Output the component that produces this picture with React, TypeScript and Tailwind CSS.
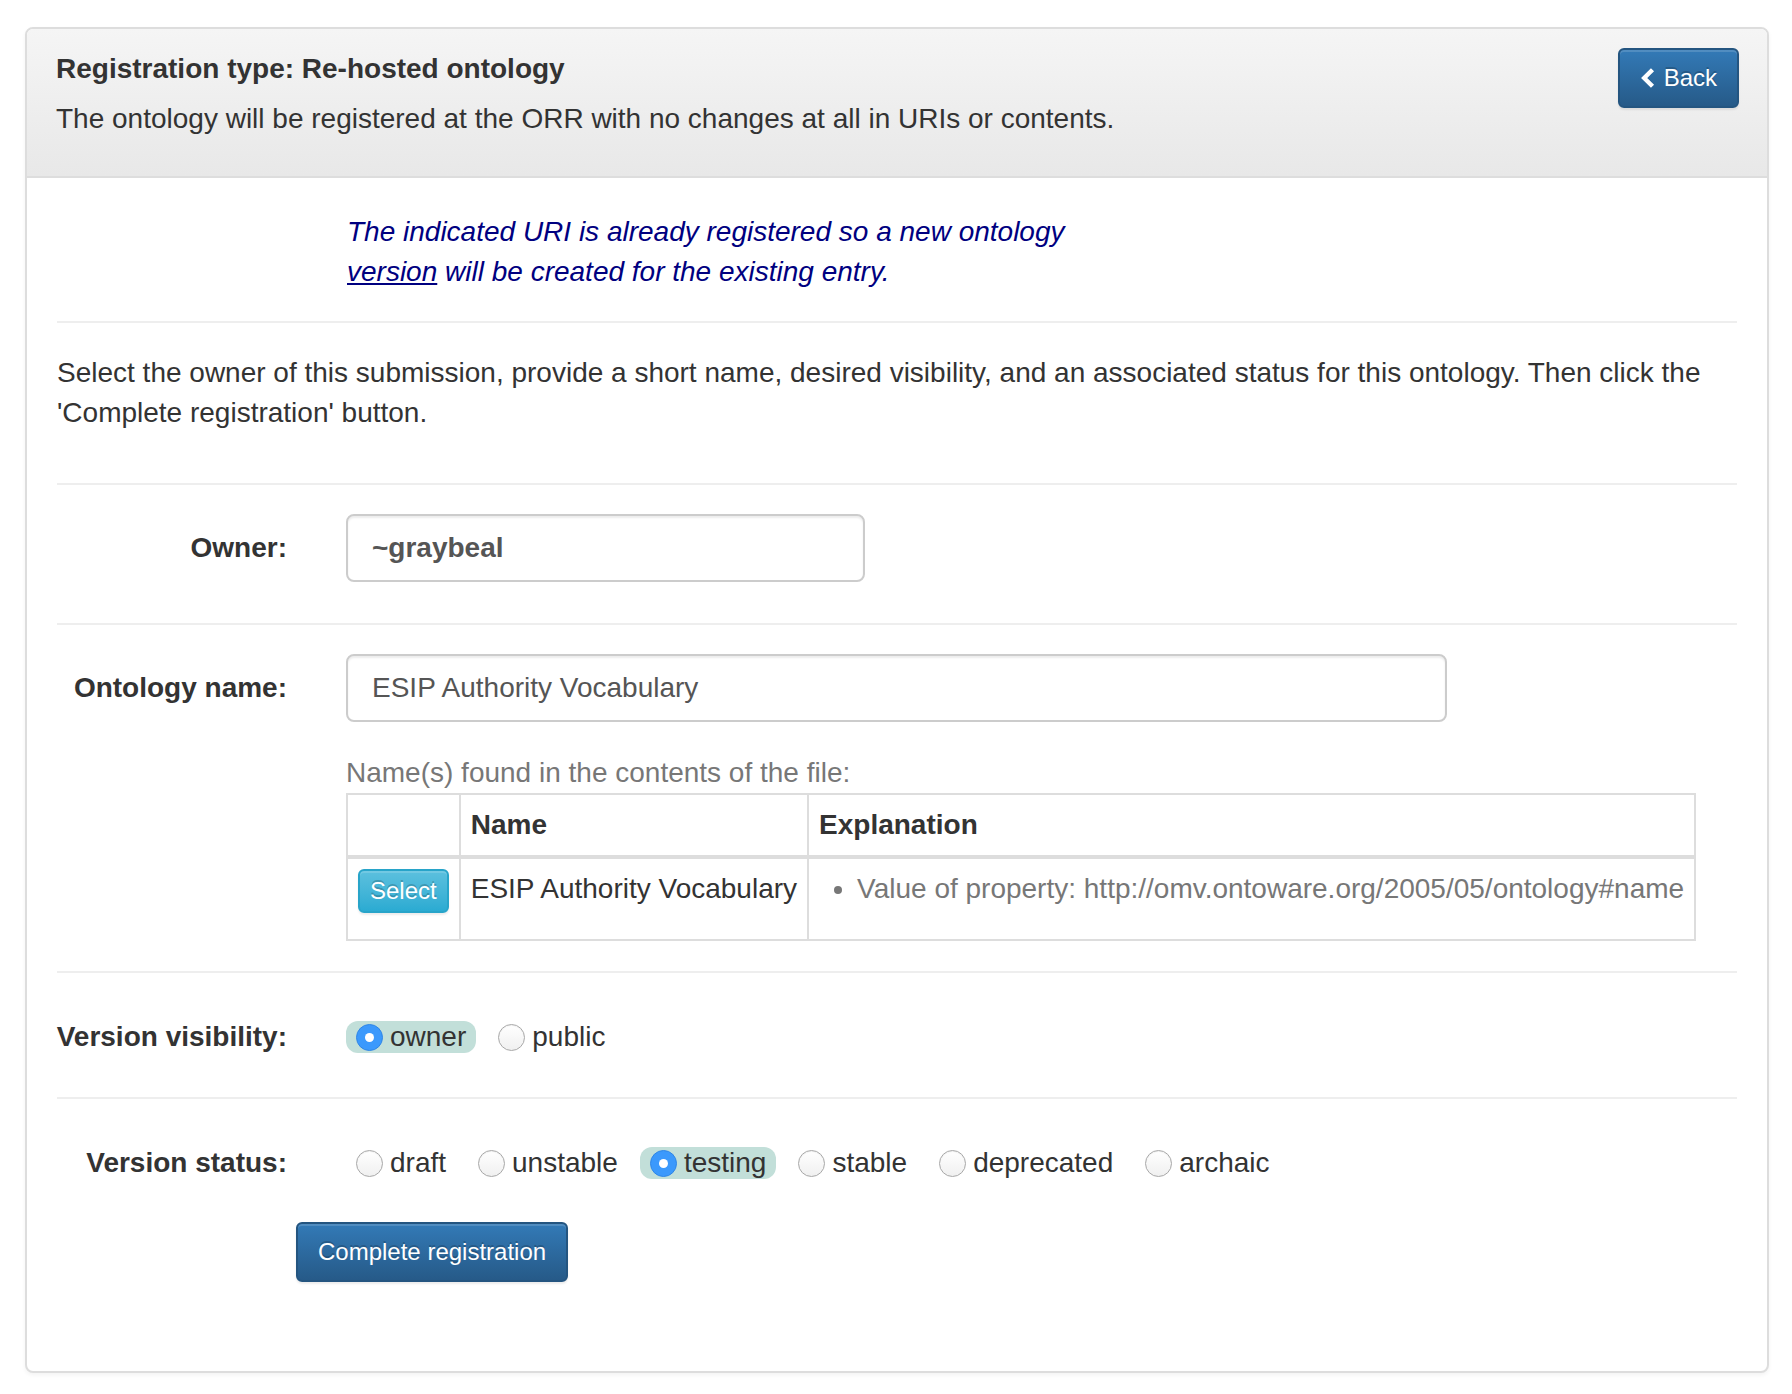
import React from "react";

const visibilities = ["owner", "public"];
const statuses = ["draft", "unstable", "testing", "stable", "deprecated", "archaic"];

function Radio({ checked }: { checked: boolean }) {
  if (checked) {
    return (
      <span className="flex h-[27px] w-[27px] items-center justify-center rounded-full border border-[#2f86e6] bg-[#3b99fc]">
        <span className="h-[9px] w-[9px] rounded-full bg-white" />
      </span>
    );
  }
  return (
    <span className="block h-[27px] w-[27px] rounded-full border border-[#a8a8a8] bg-gradient-to-b from-white to-[#f0f0f0] shadow-[inset_0_1px_1px_rgba(0,0,0,0.06)]" />
  );
}

function Options({ items, selected }: { items: string[]; selected: string }) {
  return (
    <div className="flex items-center gap-[12px]">
      {items.map((it) => (
        <label
          key={it}
          className={`flex h-[32px] items-center rounded-[12px] px-[10px] ${it === selected ? "bg-[#c2dfd9]" : ""}`}
        >
          <Radio checked={it === selected} />
          <span className="ml-[7px]">{it}</span>
        </label>
      ))}
    </div>
  );
}

function Divider() {
  return <div className="h-[2px] bg-[#eee]" />;
}

function Label({ children }: { children: React.ReactNode }) {
  return <div className="flex w-[230px] shrink-0 justify-end whitespace-nowrap font-bold">{children}</div>;
}

export default function App() {
  return (
    <div className="min-h-screen bg-white pl-[25px] pr-[23px] pt-[27px] pb-[21px] font-['Liberation_Sans',Arial,sans-serif] text-[28px] leading-[40px] text-[#333]">
      <div className="overflow-hidden rounded-[8px] border-2 border-[#ddd] bg-white shadow-[0_2px_4px_rgba(0,0,0,0.05)]">
        {/* heading */}
        <div className="flex items-start justify-between border-b-2 border-[#ddd] bg-gradient-to-b from-[#f5f5f5] to-[#e8e8e8] pl-[29px] pr-[28px] pt-[20px] pb-[37px]">
          <div>
            <h3 className="font-bold">Registration type: Re-hosted ontology</h3>
            <p className="mt-[10px]">The ontology will be registered at the ORR with no changes at all in URIs or contents.</p>
          </div>
          <button className="mt-[-1px] flex h-[60px] items-center rounded-[6px] border-2 border-[#245580] bg-gradient-to-b from-[#337ab7] to-[#265a88] px-[20px] text-[24px] text-white shadow-[inset_0_2px_0_rgba(255,255,255,0.15),0_2px_2px_rgba(0,0,0,0.075)] [text-shadow:0_-2px_0_rgba(0,0,0,0.2)]">
            <svg width="15" height="20" viewBox="0 0 15 20" className="mr-[9px]">
              <path d="M12.5 1.8 L4.2 10 L12.5 18.2" fill="none" stroke="white" strokeWidth="4.4" strokeLinejoin="miter" />
            </svg>
            Back
          </button>
        </div>

        {/* body */}
        <div className="px-[30px] pt-[34px] pb-[89px]">
          <div className="ml-[290px] italic text-[#000080]">
            The indicated URI is already registered so a new ontology
            <br />
            <a className="underline">version</a> will be created for the existing entry.
          </div>

          <div className="mt-[29px]">
            <Divider />
          </div>

          <p className="mt-[30px]">
            Select the owner of this submission, provide a short name, desired visibility, and an associated status for this ontology. Then click the
            <br />
            'Complete registration' button.
          </p>

          <div className="mt-[50px]">
            <Divider />
          </div>

          {/* owner */}
          <div className="mt-[29px] flex items-center">
            <Label>Owner:</Label>
            <input
              readOnly
              value="~graybeal"
              className="ml-[59px] h-[68px] w-[519px] rounded-[8px] border-2 border-[#ccc] px-[24px] font-bold text-[#555] shadow-[inset_0_2px_2px_rgba(0,0,0,0.075)] outline-none"
            />
          </div>

          <div className="mt-[41px]">
            <Divider />
          </div>

          {/* ontology name */}
          <div className="mt-[29px] flex items-center">
            <Label>Ontology name:</Label>
            <input
              readOnly
              value="ESIP Authority Vocabulary"
              className="ml-[59px] h-[68px] w-[1101px] rounded-[8px] border-2 border-[#ccc] px-[24px] text-[#555] shadow-[inset_0_2px_2px_rgba(0,0,0,0.075)] outline-none"
            />
          </div>
          <div className="ml-[289px] mt-[31px]">
            <div className="text-[#777]">Name(s) found in the contents of the file:</div>
            <table className="border-collapse">
              <thead>
                <tr>
                  <th className="border-2 border-b-4 border-[#ddd] p-[10px]" />
                  <th className="border-2 border-b-4 border-[#ddd] p-[10px] text-left font-bold">Name</th>
                  <th className="border-2 border-b-4 border-[#ddd] p-[10px] text-left font-bold">Explanation</th>
                </tr>
              </thead>
              <tbody>
                <tr>
                  <td className="border-2 border-[#ddd] p-[10px] align-top">
                    <button className="h-[44px] rounded-[6px] border-2 border-[#28a4c9] bg-gradient-to-b from-[#5bc0de] to-[#2aabd2] px-[10px] text-[24px] leading-[36px] text-white shadow-[inset_0_2px_0_rgba(255,255,255,0.15),0_2px_2px_rgba(0,0,0,0.075)] [text-shadow:0_-2px_0_rgba(0,0,0,0.2)]">
                      Select
                    </button>
                  </td>
                  <td className="whitespace-nowrap border-2 border-[#ddd] p-[10px] align-top">ESIP Authority Vocabulary</td>
                  <td className="whitespace-nowrap border-2 border-[#ddd] p-[10px] align-top">
                    <ul className="mb-[20px] list-disc pl-[38px] text-[#777]">
                      <li>Value of property: http://omv.ontoware.org/2005/05/ontology#name</li>
                    </ul>
                  </td>
                </tr>
              </tbody>
            </table>
          </div>

          <div className="mt-[30px]">
            <Divider />
          </div>

          {/* visibility */}
          <div className="mt-[44px] flex items-center">
            <Label>Version visibility:</Label>
            <div className="ml-[59px]">
              <Options items={visibilities} selected="owner" />
            </div>
          </div>

          <div className="mt-[40px]">
            <Divider />
          </div>

          {/* status */}
          <div className="mt-[44px] flex items-center">
            <Label>Version status:</Label>
            <div className="ml-[59px]">
              <Options items={statuses} selected="testing" />
            </div>
          </div>

          <button className="ml-[239px] mt-[39px] h-[60px] rounded-[6px] border-2 border-[#245580] bg-gradient-to-b from-[#337ab7] to-[#265a88] px-[20px] text-[24px] text-white shadow-[inset_0_2px_0_rgba(255,255,255,0.15),0_2px_2px_rgba(0,0,0,0.075)] [text-shadow:0_-2px_0_rgba(0,0,0,0.2)]">
            Complete registration
          </button>
        </div>
      </div>
    </div>
  );
}
